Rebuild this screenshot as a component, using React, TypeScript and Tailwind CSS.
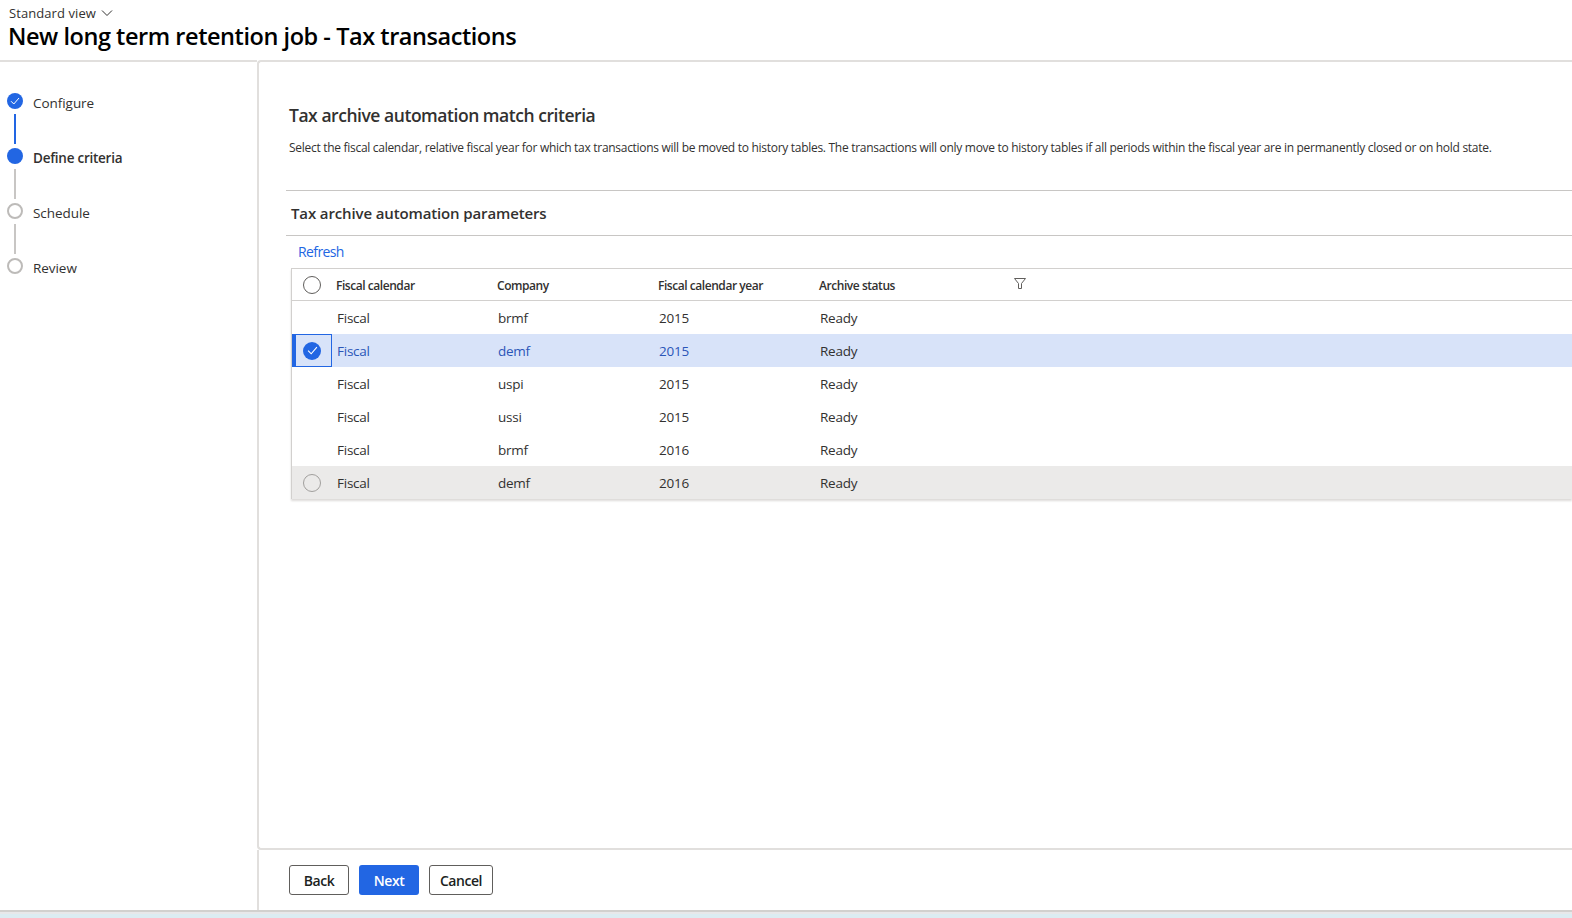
import React from "react";

const font = { fontFamily: '"Open Sans", "Noto Sans", sans-serif' };

function Check({ size = 8 }: { size?: number }) {
  return (
    <svg width={size + 2} height={size} viewBox="0 0 10 8" fill="none" stroke="white" strokeWidth="1">
      <path d="M1 4.2 L3.8 7 L9 1" />
    </svg>
  );
}

const steps = [
  { label: "Configure", state: "done", line: "blue" },
  { label: "Define criteria", state: "current", line: "gray" },
  { label: "Schedule", state: "todo", line: "gray" },
  { label: "Review", state: "todo", line: "" },
];

function Step({ s }: { s: (typeof steps)[number] }) {
  return (
    <div className="flex h-[55px]">
      <div className="flex w-[16px] flex-col items-center">
        {s.state === "done" && (
          <div className="flex h-[16px] w-[16px] items-center justify-center rounded-full bg-[#2266e3]">
            <Check />
          </div>
        )}
        {s.state === "current" && <div className="h-[16px] w-[16px] rounded-full bg-[#2266e3]" />}
        {s.state === "todo" && <div className="h-[16px] w-[16px] rounded-full border-2 border-[#bdbbb9] bg-white" />}
        {s.line === "blue" && <div className="mt-[5px] h-[30px] w-[2px] bg-[#2266e3]" />}
        {s.line === "gray" && <div className="mt-[5px] h-[30px] w-[2px] bg-[#c8c6c4]" />}
      </div>
      <div
        className={
          "ml-[10px] mt-[1px] text-[13.5px] leading-[18px] text-[#323130] " +
          (s.state === "current" ? "font-semibold tracking-[-0.25px]" : "tracking-[-0.05px]")
        }
      >
        {s.label}
      </div>
    </div>
  );
}

const rows = [
  ["Fiscal", "brmf", "2015", "Ready", ""],
  ["Fiscal", "demf", "2015", "Ready", "selected"],
  ["Fiscal", "uspi", "2015", "Ready", ""],
  ["Fiscal", "ussi", "2015", "Ready", ""],
  ["Fiscal", "brmf", "2016", "Ready", ""],
  ["Fiscal", "demf", "2016", "Ready", "hover"],
];

function Row({ r }: { r: string[] }) {
  const kind = r[4];
  const bg = kind === "selected" ? "bg-[#d8e3f9] text-[#2b56b8]" : kind === "hover" ? "bg-[#ebeae9] text-[#323130]" : "text-[#323130]";
  return (
    <div className={"flex h-[33px] items-center text-[13.5px] tracking-[-0.25px] " + bg}>
      <div className="flex h-full w-[45px] shrink-0 items-center">
        {kind === "selected" && (
          <div className="flex h-full w-[40px] items-center border border-[#2266e3] border-l-[4px] pl-[7px]">
            <div className="flex h-[18px] w-[18px] items-center justify-center rounded-full bg-[#2266e3]">
              <Check size={9} />
            </div>
          </div>
        )}
        {kind === "hover" && (
          <div className="ml-[11px] h-[18px] w-[18px] rounded-full border border-[#a19f9d]" />
        )}
      </div>
      <div className="w-[161px] shrink-0 pt-[2px]">{r[0]}</div>
      <div className="w-[161px] shrink-0 pt-[2px]">{r[1]}</div>
      <div className="w-[161px] shrink-0 pt-[2px]">{r[2]}</div>
      <div className="w-[161px] shrink-0 pt-[2px] text-[#323130]">{r[3]}</div>
    </div>
  );
}

function Btn({ children, primary, w }: { children: React.ReactNode; primary?: boolean; w: string }) {
  return (
    <button
      className={
        "flex h-[30px] items-center justify-center rounded-[3px] text-[14px] font-semibold tracking-[-0.45px] " +
        w +
        " " +
        (primary ? "bg-[#2266e3] text-white" : "border border-[#605e5c] bg-white text-[#201f1e]")
      }
    >
      {children}
    </button>
  );
}

export default function App() {
  return (
    <div style={font} className="flex h-[918px] w-[1572px] flex-col overflow-hidden bg-white">
      <header className="h-[60px] shrink-0 pl-[8px]">
        <div className="flex h-[22px] items-center pl-[1px] pt-[6px] text-[13px] tracking-[0.08px] text-[#323130]">
          Standard view
          <svg className="ml-[5px] mt-[-3px]" width="12" height="8" viewBox="0 0 12 8" fill="none" stroke="#323130" strokeWidth="1">
            <path d="M1 1.5 L6 6.5 L11 1.5" />
          </svg>
        </div>
        <h1 className="mt-[-1px] text-[23.5px] font-semibold leading-[30px] tracking-[-0.45px] text-[#000000]">
          New long term retention job - Tax transactions
        </h1>
      </header>

      <div className="flex min-h-0 flex-1">
        <aside className="w-[257px] shrink-0 border-t-2 border-[#e1dfdd] pl-[7px] pt-[31px]">
          {steps.map((s) => (
            <Step key={s.label} s={s} />
          ))}
        </aside>

        <main className="flex min-w-0 flex-1 flex-col">
          <div className="min-h-0 flex-1 rounded-l-[4px] border-y-2 border-l-2 border-[#e1dfdd]">
            <div className="pl-[30px] pt-[41px]">
              <h2 className="text-[17.5px] font-semibold leading-[24px] tracking-[-0.46px] text-[#323130]">
                Tax archive automation match criteria
              </h2>
              <p className="mt-[12px] whitespace-nowrap text-[12px] leading-[18px] tracking-[-0.29px] text-[#323130]">
                Select the fiscal calendar, relative fiscal year for which tax transactions will be moved to history tables. The transactions will only move to history tables if all periods within the fiscal year are in permanently closed or on hold state.
              </p>
            </div>
            <div className="ml-[27px] mt-[33px] flex h-[46px] items-center border-y border-[#c8c6c4] pl-[5px]">
              <h3 className="text-[15px] font-semibold tracking-[-0.13px] text-[#323130]">Tax archive automation parameters</h3>
            </div>
            <div className="ml-[22px] h-[32px] pl-[17px] pt-[6px] text-[14px] leading-[20px] tracking-[-0.6px] text-[#2266e3]">Refresh</div>
            <div className="ml-[32px] border-l border-[#d2d0ce] shadow-[0_2px_2px_#dddbd9]">
              <div className="flex h-[33px] items-center border-y border-[#d2d0ce] text-[12px] font-semibold tracking-[-0.45px] text-[#323130]">
                <div className="w-[44px] shrink-0 pl-[11px]">
                  <div className="h-[18px] w-[18px] rounded-full border border-[#605e5c]" />
                </div>
                <div className="w-[161px] shrink-0 pt-[2px]">Fiscal calendar</div>
                <div className="w-[161px] shrink-0 pt-[2px]">Company</div>
                <div className="w-[161px] shrink-0 pt-[2px]">Fiscal calendar year</div>
                <div className="w-[195px] shrink-0 pt-[2px]">Archive status</div>
                <svg className="mb-[3px]" width="12" height="11" viewBox="0 0 12 11" fill="none" stroke="#605e5c" strokeWidth="1">
                  <path d="M0.5 0.5 H11.5 L7.5 5.5 V10.5 H4.5 V5.5 Z" />
                </svg>
              </div>
              {rows.map((r, i) => (
                <Row key={i} r={r} />
              ))}
            </div>
          </div>
          <footer className="flex h-[60px] shrink-0 items-start gap-[10px] border-l-2 border-[#e1dfdd] pl-[30px] pt-[15px]">
            <Btn w="w-[60px]">Back</Btn>
            <Btn primary w="w-[60px]">Next</Btn>
            <Btn w="w-[64px]">Cancel</Btn>
          </footer>
        </main>
      </div>

      <div className="flex h-[8px] shrink-0 flex-col">
        <div className="h-[2px] bg-[#d2d0ce]" />
        <div className="h-[2px] bg-[#e8e8ea]" />
        <div className="flex-1 bg-[#dcecf2]" />
      </div>
    </div>
  );
}
